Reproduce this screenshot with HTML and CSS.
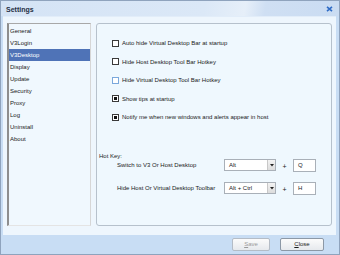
FILE: index.html
```html
<!DOCTYPE html>
<html>
<head>
<meta charset="utf-8">
<link rel="stylesheet" href="styles.css">
</head>
<body>
<div class="window">
  <div class="titlebar">
    <span class="title">Settings</span>
    <svg class="close-x" width="7" height="6" viewBox="0 0 7 6"><path d="M1 0.8 L6 5.2 M6 0.8 L1 5.2" stroke="#2f6cc6" stroke-width="1.6" fill="none"/></svg>
  </div>
  <div class="inner">
    <ul class="nav">
      <li>General</li>
      <li>V3Login</li>
      <li class="sel">V3Desktop</li>
      <li>Display</li>
      <li>Update</li>
      <li>Security</li>
      <li>Proxy</li>
      <li>Log</li>
      <li>Uninstall</li>
      <li>About</li>
    </ul>
    <div class="panel">
      <div class="opts">
        <div class="opt"><span class="cb"></span>Auto hide Virtual Desktop Bar at startup</div>
        <div class="opt"><span class="cb"></span>Hide Host Desktop Tool Bar Hotkey</div>
        <div class="opt"><span class="cb hover"></span>Hide Virtual Desktop Tool Bar Hotkey</div>
        <div class="opt"><span class="cb on"></span>Show tips at startup</div>
        <div class="opt"><span class="cb on"></span>Notify me when new windows and alerts appear in host</div>
      </div>
      <div class="hk-title">Hot Key:</div>
      <div class="hk-row">
        <span class="hk-label">Switch to V3 Or Host Desktop</span>
        <span class="combo"><span class="combo-text">Alt</span><span class="combo-btn"><svg width="4" height="3" viewBox="0 0 4 3"><path d="M0 0 H4 L2 2.5 Z" fill="#222"/></svg></span></span>
        <span class="plus">+</span>
        <span class="tb">Q</span>
      </div>
      <div class="hk-row">
        <span class="hk-label">Hide Host Or Virtual Desktop Toolbar</span>
        <span class="combo"><span class="combo-text">Alt + Ctrl</span><span class="combo-btn"><svg width="4" height="3" viewBox="0 0 4 3"><path d="M0 0 H4 L2 2.5 Z" fill="#222"/></svg></span></span>
        <span class="plus">+</span>
        <span class="tb">H</span>
      </div>
    </div>
  </div>
  <div class="footer">
    <button class="btn save" disabled><u>S</u>ave</button>
    <button class="btn close"><u>C</u>lose</button>
  </div>
</div>
</body>
</html>
```
FILE: styles.css
```css
* { box-sizing: border-box; }
html, body { margin: 0; padding: 0; }
body {
  width: 340px;
  height: 255px;
  font-family: "Liberation Sans", Arial, sans-serif;
  font-size: 6px;
  color: #1a1a1a;
  overflow: hidden;
}
.window {
  width: 340px;
  height: 255px;
  border: 1px solid #8fa3bd;
  background: #c8ddf4;
  display: flex;
  flex-direction: column;
}
.titlebar {
  height: 15px;
  flex: none;
  display: flex;
  align-items: center;
  justify-content: space-between;
  padding: 0 6px 0 5px;
  background: linear-gradient(100deg, #d4e3f5 0%, #dbe8f7 60%, #e6eff9 72%, #cfdff3 78%, #cadcf2 100%);
}
.title {
  font-size: 7px;
  font-weight: bold;
  color: #1f2f44;
  margin-top: 1px;
}
.close-x { display: block; margin-top: 1px; }
.inner {
  flex: 1;
  margin: 0 3px 0 2px;
  background: #eef6fd;
  display: flex;
  gap: 5px;
  padding: 6px 4px 9px 4px;
  border-top: 1px solid #e2edf9;
}
.nav {
  list-style: none;
  margin: 0;
  padding: 1px 0 0 0;
  width: 84px;
  flex: none;
  background: #f0f8fe;
  border-left: 2px solid #8e8e8e;
  border-top: 1px solid #a8a8a8;
  border-right: 1px solid #d6d6d6;
  border-bottom: 1px solid #e4e4e4;
}
.nav li {
  height: 12px;
  line-height: 12px;
  padding-left: 1px;
  color: #1a1a1a;
}
.nav li.sel {
  background: #4f73b7;
  color: #ffffff;
}
.panel {
  flex: 1;
  border: 1px solid #b6c1cc;
  border-radius: 3px;
  background: #eff8fe;
  padding: 14px 4px 0 1px;
  display: flex;
  flex-direction: column;
}
.opts {
  display: flex;
  flex-direction: column;
  gap: 8.5px;
  padding-left: 14px;
}
.opt {
  height: 10px;
  display: flex;
  align-items: center;
  gap: 3px;
}
.cb {
  width: 7px;
  height: 7px;
  border: 1px solid #3a3a3a;
  background: #ffffff;
  flex: none;
  display: flex;
  align-items: center;
  justify-content: center;
}
.cb.hover { border-color: #7aa8dc; }
.cb.on::after {
  content: "";
  width: 3px;
  height: 3px;
  background: #111;
}
.hk-title {
  margin-top: 31px;
  height: 6px;
  line-height: 6px;
  padding-left: 1px;
}
.hk-row {
  display: flex;
  align-items: center;
  height: 13px;
  padding-left: 19px;
  margin-top: -0.5px;
}
.hk-row + .hk-row { margin-top: 10px; }
.hk-label { width: 107px; flex: none; }
.combo {
  width: 52px;
  height: 12px;
  border: 1px solid #a9b0b8;
  background: #fff;
  display: flex;
  align-items: center;
  justify-content: space-between;
  flex: none;
}
.combo-text { padding-left: 4px; }
.combo-btn {
  width: 8px;
  height: 10px;
  background: linear-gradient(#f3f3f3, #dcdcdc);
  border-left: 1px solid #c8c8c8;
  display: flex;
  align-items: center;
  justify-content: center;
}
.combo-btn svg { display: block; }
.plus {
  width: 17px;
  text-align: center;
  flex: none;
  font-size: 7px;
  margin-top: 2px;
}
.tb {
  width: 23px;
  height: 13px;
  border: 1px solid #a9b0b8;
  background: #fff;
  padding-left: 4px;
  line-height: 11px;
  flex: none;
}
.footer {
  height: 19px;
  flex: none;
  display: flex;
  justify-content: flex-end;
  align-items: flex-start;
  gap: 10px;
  padding: 3px 15px 0 0;
}
.btn {
  height: 13px;
  border: 1px solid #8c98a6;
  border-radius: 2px;
  background: linear-gradient(#fbfbfb, #e6e9ed);
  font-family: "Liberation Sans", Arial, sans-serif;
  font-size: 6px;
  padding: 0;
  line-height: 11px;
}
.btn u { text-decoration: underline; }
.btn.save { width: 38px; color: #9a9a9a; border-color: #b4bcc6; }
.btn.close { width: 44px; color: #1a1a1a; }
```
